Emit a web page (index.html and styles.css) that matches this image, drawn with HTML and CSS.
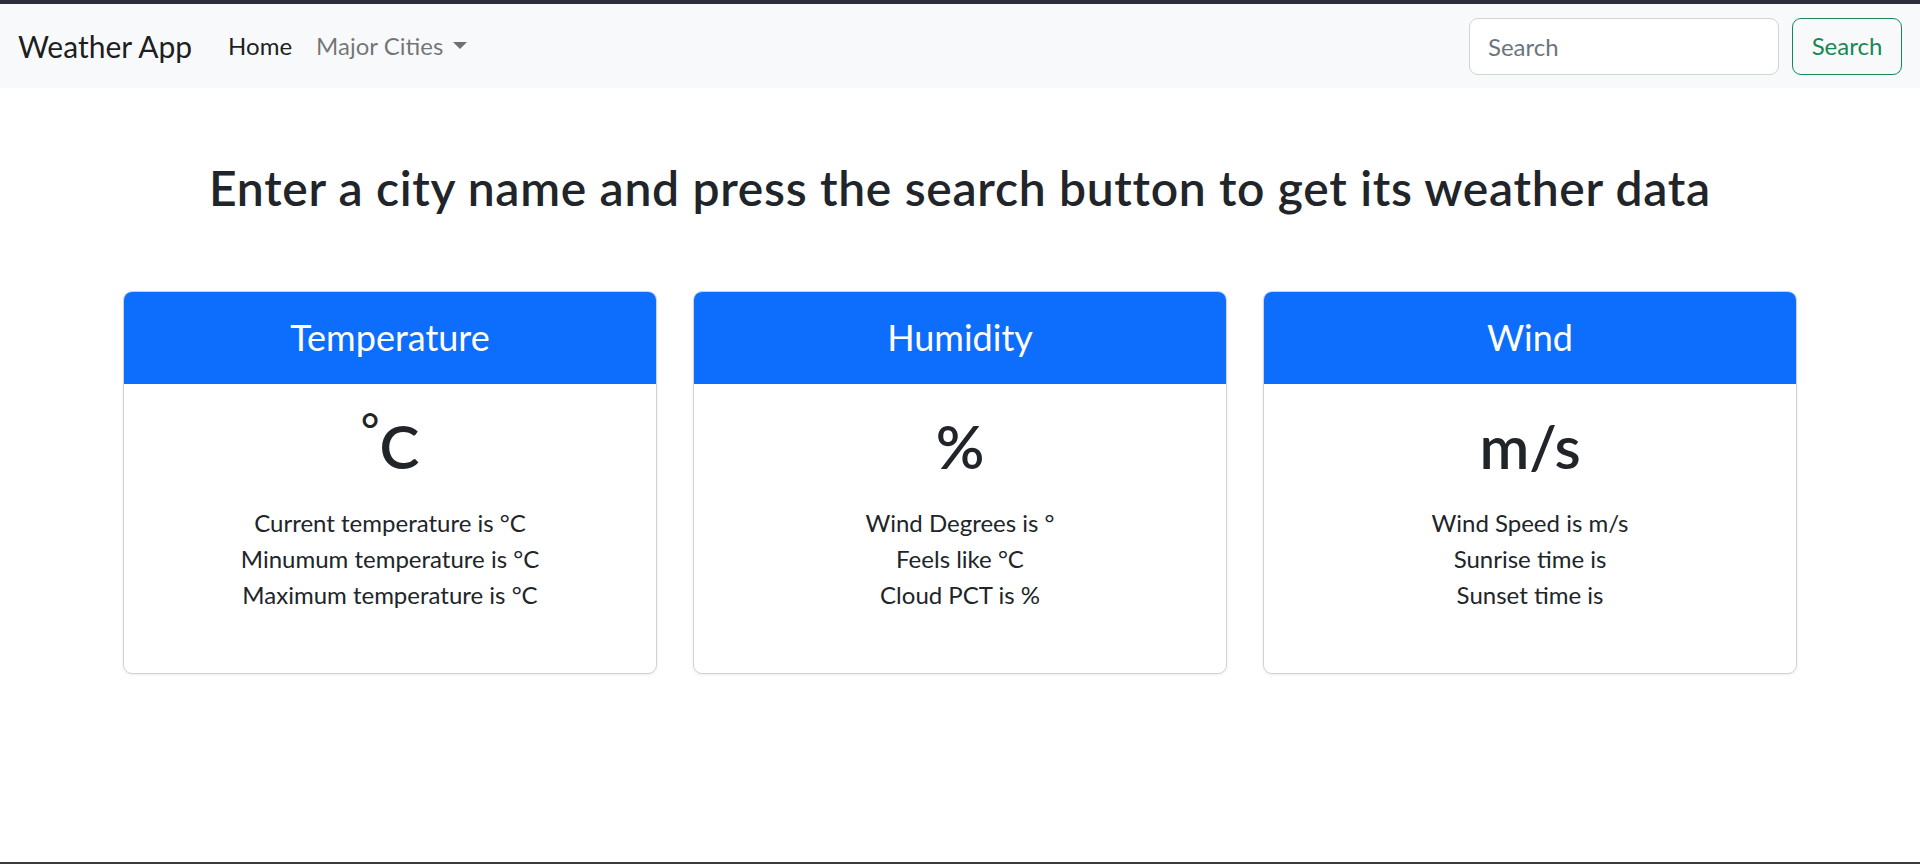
FILE: index.html
```html
<!DOCTYPE html>
<html lang="en">
<head>
<meta charset="utf-8">
<title>Weather App</title>
<link rel="stylesheet" href="styles.css">
</head>
<body>
<div class="page">
  <nav class="navbar">
    <a class="brand" href="#">Weather App</a>
    <ul class="nav">
      <li><a class="nav-link active" href="#">Home</a></li>
      <li><a class="nav-link dropdown-toggle" href="#">Major Cities</a></li>
    </ul>
    <form class="search">
      <input class="search-input" type="search" placeholder="Search">
      <button class="search-btn" type="button">Search</button>
    </form>
  </nav>
  <main class="container">
    <h2 class="title">Enter a city name and press the search button to get its weather data</h2>
    <div class="cards">
      <div class="card">
        <div class="card-header"><h4>Temperature</h4></div>
        <div class="card-body">
          <h1 class="value"><sup>°</sup>C</h1>
          <p class="info">Current temperature is °C<br>Minumum temperature is °C<br>Maximum temperature is °C</p>
        </div>
      </div>
      <div class="card">
        <div class="card-header"><h4>Humidity</h4></div>
        <div class="card-body">
          <h1 class="value">%</h1>
          <p class="info">Wind Degrees is °<br>Feels like °C<br>Cloud PCT is %</p>
        </div>
      </div>
      <div class="card">
        <div class="card-header"><h4>Wind</h4></div>
        <div class="card-body">
          <h1 class="value">m/s</h1>
          <p class="info">Wind Speed is m/s<br>Sunrise time is<br>Sunset time is</p>
        </div>
      </div>
    </div>
  </main>
  <div class="bottom-edge"></div>
</div>
</body>
</html>
```

FILE: styles.css
```css
* { box-sizing: border-box; }
html, body { margin: 0; padding: 0; }
body {
  font-family: Lato, "Open Sans", sans-serif;
  font-size: 24px;
  line-height: 1.5;
  color: #212529;
  background: #fff;
}
.page {
  height: 864px;
  display: flex;
  flex-direction: column;
  border-top: 4px solid #2c2e3c;
}
.navbar {
  display: flex;
  align-items: center;
  background: #f8f9fa;
  padding: 12px 18px;
  height: 84px;
}
.brand {
  font-size: 30px;
  line-height: 45px;
  color: rgba(0,0,0,.9);
  text-decoration: none;
  margin-right: 24px;
}
.nav {
  display: flex;
  list-style: none;
  margin: 0;
  padding: 0;
  flex: 1;
}
.nav-link {
  display: block;
  padding: 12px 12px;
  line-height: 36px;
  color: rgba(0,0,0,.55);
  text-decoration: none;
}
.nav-link.active { color: rgba(0,0,0,.9); }
.dropdown-toggle::after {
  content: "";
  display: inline-block;
  margin-left: 0.4em;
  vertical-align: 0.255em;
  border-top: 0.3em solid;
  border-right: 0.3em solid transparent;
  border-left: 0.3em solid transparent;
  border-bottom: 0;
}
.search {
  display: flex;
  gap: 13px;
}
.search-input {
  width: 310px;
  height: 57px;
  padding: 9px 18px;
  font: inherit;
  font-size: 24px;
  color: #212529;
  background: #fff;
  border: 1px solid #ced4da;
  border-radius: 9px;
  outline: none;
}
.search-input::placeholder { color: #6c757d; }
.search-btn {
  width: 110px;
  height: 57px;
  padding: 9px 12px;
  font: inherit;
  font-size: 24px;
  color: #198754;
  background: transparent;
  border: 1px solid #198754;
  border-radius: 9px;
}
.container {
  width: 1710px;
  margin: 0 auto;
  padding: 0 18px;
}
.title {
  margin: 71px 0 74px;
  font-size: 48px;
  font-weight: 600;
  line-height: 1.2;
  letter-spacing: 0.7px;
  text-align: center;
}
.cards {
  display: flex;
  gap: 36px;
}
.card {
  width: 534px;
  border: 1px solid rgba(0,0,0,.175);
  border-radius: 9px;
  overflow: hidden;
  box-shadow: 0 1px 3px rgba(0,0,0,.08);
  text-align: center;
}
.card-header {
  background: #0d6efd;
  color: #fff;
  padding: 24px 24px 25px;
}
.card-header h4 {
  margin: 0;
  font-size: 36px;
  font-weight: 400;
  line-height: 1.2;
}
.card-body {
  padding: 26px 24px 60px;
}
.value {
  margin: 0 0 23px;
  font-size: 60px;
  font-weight: 600;
  line-height: 72px;
}
.value sup {
  position: relative;
  top: -0.5em;
  font-size: 0.75em;
  font-weight: 500;
  line-height: 0;
  vertical-align: baseline;
}
.info {
  margin: 0;
  font-size: 24px;
  line-height: 36px;
}
.bottom-edge {
  margin-top: auto;
  height: 2px;
  background: #3a3a3a;
}
```
